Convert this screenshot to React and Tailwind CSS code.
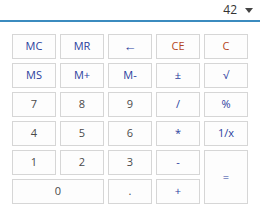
import React from "react";

const BLUE = "text-[#2b3f9e]";
const RED = "text-[#b5461c]";
const GRAY = "text-[#4a4a4a]";

const keys = [
  ["MC", BLUE], ["MR", BLUE], ["←", BLUE, "text-[13px]"], ["CE", RED], ["C", RED],
  ["MS", BLUE], ["M+", BLUE], ["M-", BLUE], ["±", BLUE], ["√", BLUE],
  ["7", GRAY], ["8", GRAY], ["9", GRAY], ["/", BLUE], ["%", BLUE],
  ["4", GRAY], ["5", GRAY], ["6", GRAY], ["*", BLUE], ["1/x", BLUE],
  ["1", GRAY], ["2", GRAY], ["3", GRAY], ["-", BLUE], ["=", BLUE, "row-span-2"],
  ["0", GRAY, "col-span-2"], [".", GRAY], ["+", BLUE],
];

export default function App() {
  return (
    <div
      className="w-[260px] h-[217px] bg-white overflow-hidden"
      style={{ fontFamily: '"Open Sans", "Noto Sans", sans-serif' }}
    >
      {/* Display */}
      <div className="h-[22px] border-b-2 border-[#3b8bbf] flex items-center justify-end pr-[7px] gap-[8px] text-[12px] text-[#333]">
        <span>42</span>
        <svg width="8" height="5" viewBox="0 0 8 5" className="mt-[1px]">
          <path d="M0 0 H8 L4 5 Z" fill="#444" />
        </svg>
      </div>

      {/* Keypad */}
      <div className="ml-[12px] mt-[12px] w-[236px] grid grid-cols-5 auto-rows-[25px] gap-[4px]">
        {keys.map(([label, color, extra], i) => (
          <button
            key={i}
            className={`${color} bg-[#fdfdfd] border border-[#d6d6d6] text-[11px] flex items-center justify-center ${extra || ""}`}
          >
            {label}
          </button>
        ))}
      </div>
    </div>
  );
}
